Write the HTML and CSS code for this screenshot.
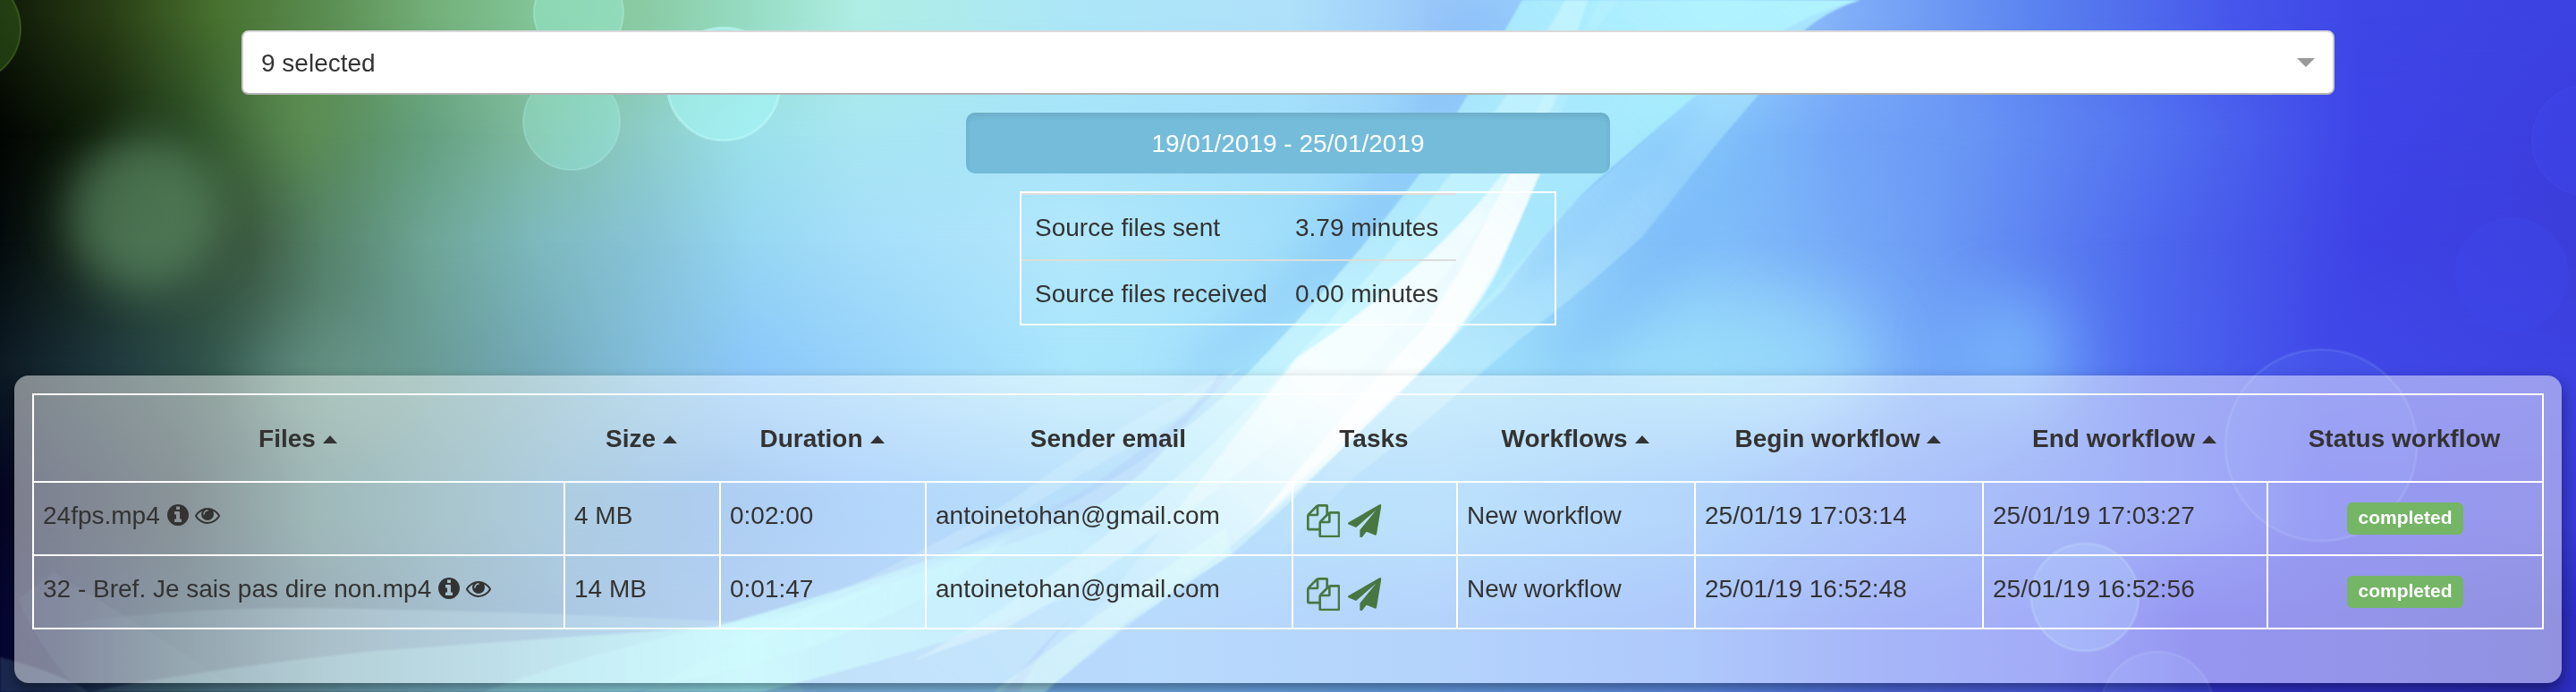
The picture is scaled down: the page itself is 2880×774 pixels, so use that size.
FILE: index.html
```html
<!DOCTYPE html>
<html lang="en">
<head>
<meta charset="utf-8">
<title>Workflows</title>
<link rel="stylesheet" href="styles.css">
</head>
<body>
<div class="backdrop">
  <div class="sky sky-1"></div>
  <div class="sky sky-2"></div>
  <div class="sky sky-3"></div>
  <div class="sky sky-4"></div>
  <div class="sky sky-5"></div>
  <div class="sky sky-6"></div>
  <svg class="rays" viewBox="0 0 2880 774" width="2880" height="774">
    <defs>
      <filter id="b2" x="-10%" y="-10%" width="120%" height="120%"><feGaussianBlur stdDeviation="1"/></filter>
      <filter id="b8" x="-20%" y="-20%" width="140%" height="140%"><feGaussianBlur stdDeviation="8"/></filter>
      <filter id="b20" x="-80%" y="-80%" width="260%" height="260%"><feGaussianBlur stdDeviation="24"/></filter>
      <filter id="b36" x="-120%" y="-120%" width="340%" height="340%"><feGaussianBlur stdDeviation="36"/></filter>
      <linearGradient id="band" gradientUnits="userSpaceOnUse" x1="1900" y1="0" x2="1000" y2="774">
        <stop offset="0" stop-color="#b4ffff" stop-opacity=".7"/>
        <stop offset=".25" stop-color="#b8f8ff" stop-opacity=".6"/>
        <stop offset=".5" stop-color="#dcffff" stop-opacity=".6"/>
        <stop offset=".75" stop-color="#b8f8ff" stop-opacity=".45"/>
        <stop offset="1" stop-color="#b4f8ff" stop-opacity=".3"/>
      </linearGradient>
      <linearGradient id="side" gradientUnits="userSpaceOnUse" x1="2050" y1="0" x2="1450" y2="620">
        <stop offset="0" stop-color="#b4f6ff" stop-opacity=".8"/>
        <stop offset=".3" stop-color="#b0e8ff" stop-opacity=".35"/>
        <stop offset=".7" stop-color="#d0f6ff" stop-opacity=".5"/>
        <stop offset="1" stop-color="#d0f6ff" stop-opacity=".05"/>
      </linearGradient>
      <linearGradient id="core" gradientUnits="userSpaceOnUse" x1="1740" y1="100" x2="1180" y2="740">
        <stop offset="0" stop-color="#e8ffff" stop-opacity=".1"/>
        <stop offset=".2" stop-color="#fff" stop-opacity=".75"/>
        <stop offset=".5" stop-color="#fff" stop-opacity=".8"/>
        <stop offset=".7" stop-color="#f0ffff" stop-opacity=".4"/>
        <stop offset="1" stop-color="#d8ffff" stop-opacity="0"/>
      </linearGradient>
      <linearGradient id="wave" gradientUnits="userSpaceOnUse" x1="80" y1="0" x2="1300" y2="0">
        <stop offset="0" stop-color="#8fd0dc" stop-opacity=".15"/>
        <stop offset=".35" stop-color="#98e0e6" stop-opacity=".42"/>
        <stop offset=".62" stop-color="#a8ffff" stop-opacity=".75"/>
        <stop offset=".8" stop-color="#a8f8ff" stop-opacity=".5"/>
        <stop offset="1" stop-color="#a8f4ff" stop-opacity="0"/>
      </linearGradient>
      <linearGradient id="veil" gradientUnits="userSpaceOnUse" x1="60" y1="0" x2="900" y2="0">
        <stop offset="0" stop-color="#a0d8e8" stop-opacity="0"/>
        <stop offset=".4" stop-color="#a0d8e8" stop-opacity=".3"/>
        <stop offset="1" stop-color="#a0e8f0" stop-opacity=".3"/>
      </linearGradient>
    </defs>

    <!-- soft blobs -->
    <ellipse cx="160" cy="238" rx="84" ry="86" fill="#5f8f68" opacity=".62" filter="url(#b20)"/>
    <ellipse cx="330" cy="120" rx="60" ry="60" fill="#6a9c5a" opacity=".35" filter="url(#b36)"/>
    <ellipse cx="370" cy="420" rx="90" ry="60" fill="#7cb09c" opacity=".35" filter="url(#b36)"/>
    <ellipse cx="2250" cy="395" rx="60" ry="60" fill="#84c4ff" opacity=".65" filter="url(#b36)"/>
    <ellipse cx="1980" cy="400" rx="110" ry="70" fill="#9ce0fa" opacity=".6" filter="url(#b36)"/>

    <!-- blue edges beside the ribbon -->
    <path d="M1690 0 Q1600 200 1530 280 Q1440 350 1360 420 L1300 420 Q1470 300 1560 170 L1620 0Z" fill="#78b2f6" opacity=".4" filter="url(#b20)"/>
    <path d="M1930 170 L1700 420 L1780 420 L2000 170Z" fill="#6fb2f8" opacity=".35" filter="url(#b20)"/>
    <path d="M1900 106 Q1800 190 1745 240 Q1720 290 1690 330 Q1800 270 1900 130Z" fill="#6fb8fa" opacity=".4" filter="url(#b8)"/>

    <!-- ribbon -->
    <g filter="url(#b2)">
      <path d="M1702 0 L1641 106 L1588 194 Q1500 310 1392 420 Q1240 570 1010 640 Q860 700 720 774 L1168 774 Q1280 680 1377 620 L1444 560 Q1600 400 1680 325 Q1740 240 1799 190 L1897 106 Q1990 20 2080 0Z" fill="url(#band)"/>
      <path d="M1800 0 L2080 0 Q2000 25 1966 106 L1920 160 L1836 265 Q1770 325 1699 380 L1587 477 L1510 537 L1430 620 L1444 560 Q1620 390 1745 240 L1897 106Z" fill="url(#side)"/>
      <path d="M1750 0 L1775 0 L1740 110 Q1670 260 1540 390 Q1360 570 1130 700 L1020 740 Q1270 600 1430 420 Q1630 210 1750 0Z" fill="#e6ffff" opacity=".35"/>
      <path d="M1790 0 L1810 0 L1784 34 L1735 150 Q1690 300 1603 400 Q1500 510 1377 610 Q1270 690 1180 740 Q1270 630 1340 540 L1450 400 Q1600 300 1680 194 L1730 100Z" fill="url(#core)"/>
      <path d="M1722 194 L1676 300 Q1630 390 1520 475 L1400 590 Q1510 450 1590 370 L1634 300 L1689 194Z" fill="#fff" opacity=".7"/>
      <path d="M1375 420 Q1345 450 1320 480 Q1270 550 1180 590 Q1120 615 1060 625 Q1160 580 1230 537 Q1300 485 1330 460 L1362 420Z" fill="#6f9ff2" opacity=".38"/>
      <path d="M1390 410 Q1250 470 1130 560 Q960 660 800 720 L840 720 Q1060 630 1210 530 Q1320 470 1390 410Z" fill="#e0ffff" opacity=".2"/>
      <path d="M1200 690 Q1165 720 1150 740 L1120 774 L1140 774 Q1160 730 1200 690Z" fill="#6b8ff0" opacity=".35"/>
      <path d="M1377 620 L1255 700 L1168 774 L1110 774 Q1220 690 1370 590Z" fill="#c8fff4" opacity=".4"/>
      <!-- wave at the lower left -->
      <path d="M60 700 Q200 676 408 681 Q640 686 830 696 L900 774 L60 774Z" fill="url(#veil)"/>
      <path d="M150 764 Q300 740 420 728 L800 701 Q1000 645 1160 580 L1300 620 Q1120 710 850 774 L100 774Z" fill="url(#wave)"/>
      <path d="M540 774 Q700 715 860 690 Q1020 650 1130 600 Q1000 720 700 774Z" fill="#aaffff" opacity=".3"/>
      <path d="M0 735 Q60 750 100 774 L0 774Z" fill="#7fb4c8" opacity=".2"/>
      <path d="M60 640 Q160 700 270 774 L90 774 Q40 720 20 670Z" fill="#8fb8c8" opacity=".07"/>
    </g>

    <!-- bokeh -->
    <g fill="#a4fff0" stroke="#c4ffff">
      <circle cx="-37" cy="32" r="60" fill="#3a6a20" fill-opacity=".45" stroke="#6fae3c" stroke-opacity=".3" stroke-width="2"/>
      <circle cx="647" cy="14" r="50" fill-opacity=".32" stroke-opacity=".3" stroke-width="2"/>
      <circle cx="639" cy="136" r="54" fill-opacity=".28" stroke-opacity=".22" stroke-width="2"/>
      <circle cx="809" cy="94" r="63" fill="#a8f6f6" fill-opacity=".6" stroke-opacity=".45" stroke-width="3"/>
      <circle cx="2595" cy="498" r="107" fill="#6aa0ff" fill-opacity=".12" stroke="#a0c8ff" stroke-opacity=".14" stroke-width="3"/>
      <circle cx="2331" cy="668" r="60" fill="#78b8ff" fill-opacity=".28" stroke="#a0d8ff" stroke-opacity=".22" stroke-width="3"/>
      <circle cx="2412" cy="792" r="63" fill="#78a8ff" fill-opacity=".14" stroke="#a0c8ff" stroke-opacity=".12" stroke-width="3"/>
      <circle cx="2893" cy="157" r="62" fill="#4048f0" fill-opacity=".35" stroke="#6070ff" stroke-opacity=".1" stroke-width="2"/>
      <circle cx="2808" cy="307" r="64" fill="#4048f0" fill-opacity=".3" stroke="none"/>
    </g>
  </svg>
</div>

<svg class="symbols" width="0" height="0">
  <symbol id="info" viewBox="128 128 1536 1536"><path d="M1152 1376v-160q0-14-9-23t-23-9h-96v-512q0-14-9-23t-23-9h-320q-14 0-23 9t-9 23v160q0 14 9 23t23 9h96v320h-96q-14 0-23 9t-9 23v160q0 14 9 23t23 9h448q14 0 23-9t9-23zm-128-896v-160q0-14-9-23t-23-9h-192q-14 0-23 9t-9 23v160q0 14 9 23t23 9h192q14 0 23-9t9-23zm640 416q0 209-103 385.5t-279.5 279.5-385.5 103-385.5-103-279.5-279.5-103-385.5 103-385.5 279.5-279.5 385.5-103 385.5 103 279.5 279.5 103 385.5z"/></symbol>
  <symbol id="eye" viewBox="0 384 1792 1152"><path d="M1664 960q-152-236-381-353 61 104 61 225 0 185-131.5 316.5t-316.5 131.5-316.5-131.5-131.5-316.5q0-121 61-225-229 117-381 353 133 205 333.5 326.5t434.5 121.5 434.5-121.5 333.5-326.5zm-720-384q0-20-14-34t-34-14q-125 0-214.5 89.5t-89.5 214.5q0 20 14 34t34 14 34-14 14-34q0-86 61-147t147-61q20 0 34-14t14-34zm848 384q0 34-20 69-140 230-376.5 368.5t-499.5 138.5-499.5-139-376.5-368q-20-35-20-69t20-69q140-229 376.5-368t499.5-139 499.5 139 376.5 368q20 35 20 69z"/></symbol>
  <symbol id="files" viewBox="0 0 1792 1792"><path d="M1696 384q40 0 68 28t28 68v1216q0 40-28 68t-68 28h-960q-40 0-68-28t-28-68v-288h-544q-40 0-68-28t-28-68v-672q0-40 20-88t48-76l408-408q28-28 76-48t88-20h416q40 0 68 28t28 68v328q68-40 128-40h416zm-544 213l-299 299h299v-299zm-640-384l-299 299h299v-299zm196 647l316-316v-416h-384v416q0 40-28 68t-68 28h-416v640h512v-256q0-40 20-88t48-76zm956 804v-1152h-384v416q0 40-28 68t-68 28h-416v640h896z"/></symbol>
  <symbol id="plane" viewBox="0 0 1792 1792"><path d="M1764 11q33 24 27 64l-256 1536q-5 29-32 45-14 8-31 8-11 0-24-5l-453-185-242 295q-18 23-49 23-13 0-22-4-19-7-30.5-23.5t-11.5-36.5v-349l864-1059-1069 925-395-162q-37-14-40-55-2-40 32-59l1664-960q15-9 32-9 20 0 36 11z"/></symbol>
</svg>

<main class="page">
  <div class="select"><span>9 selected</span><span class="select-arrow"></span></div>
  <button class="range">19/01/2019 - 25/01/2019</button>
  <section class="summary">
    <dl class="summary-list">
      <div class="summary-row"><dt>Source files sent</dt><dd>3.79 minutes</dd></div>
      <div class="summary-row"><dt>Source files received</dt><dd>0.00 minutes</dd></div>
    </dl>
  </section>
  <section class="panel">
    <table class="jobs">
      <colgroup>
        <col class="c-files"><col class="c-size"><col class="c-duration"><col class="c-sender"><col class="c-tasks"><col class="c-flow"><col class="c-begin"><col class="c-end"><col class="c-status">
      </colgroup>
      <thead>
        <tr>
          <th>Files<i class="caret"></i></th><th>Size<i class="caret"></i></th><th>Duration<i class="caret"></i></th><th>Sender email</th><th>Tasks</th><th>Workflows<i class="caret"></i></th><th>Begin workflow<i class="caret"></i></th><th>End workflow<i class="caret"></i></th><th>Status workflow</th>
        </tr>
      </thead>
      <tbody>
        <tr>
          <td>24fps.mp4<svg class="i-info"><use href="#info"/></svg><svg class="i-eye"><use href="#eye"/></svg></td>
          <td>4 MB</td><td>0:02:00</td><td>antoinetohan@gmail.com</td>
          <td><div class="tasks"><svg><use href="#files"/></svg><svg><use href="#plane"/></svg></div></td>
          <td>New workflow</td><td>25/01/19 17:03:14</td><td>25/01/19 17:03:27</td>
          <td><div class="badge">completed</div></td>
        </tr>
        <tr>
          <td>32 - Bref. Je sais pas dire non.mp4<svg class="i-info"><use href="#info"/></svg><svg class="i-eye"><use href="#eye"/></svg></td>
          <td>14 MB</td><td>0:01:47</td><td>antoinetohan@gmail.com</td>
          <td><div class="tasks"><svg><use href="#files"/></svg><svg><use href="#plane"/></svg></div></td>
          <td>New workflow</td><td>25/01/19 16:52:48</td><td>25/01/19 16:52:56</td>
          <td><div class="badge">completed</div></td>
        </tr>
      </tbody>
    </table>
  </section>
</main>
</body>
</html>
```
FILE: styles.css
```css
* { box-sizing: border-box; }
html, body { margin: 0; height: 774px; overflow: hidden; }
body {
  position: relative;
  font-family: "Liberation Sans", Arial, sans-serif;
  font-size: 28px;
  line-height: 40px;
  color: #333;
}

/* Backdrop: horizontal colour bands, each fading in over the one above */
.backdrop { position: absolute; inset: 0; overflow: hidden; z-index: -1; }
.sky, .rays { position: absolute; inset: 0; }
.sky-1 {
  background: linear-gradient(90deg, #0f1908 0, #283c14 120px, #47702f 240px, #5a8c50 360px, #73af78 480px, #82c598 600px, #8acba4 720px, #96dcc3 840px, #afeee4 960px, #ace6f8 1200px, #afe1fa 1440px, #9bc8fa 1600px, #96cdfc 1750px, #a0dcfc 1920px, #82aff8 2060px, #5a82f0 2280px, #4655eb 2500px, #3e46e6 2640px, #3c41e1 2880px);
}
.sky-2 {
  background: linear-gradient(90deg, #020502 0, #0f1e0a 110px, #2d4f28 220px, #558550 340px, #64a080 480px, #80bca2 600px, #8ccdc8 720px, #9be1eb 840px, #a8e6f2 960px, #a5e4fa 1200px, #a0defa 1440px, #96d2fa 1620px, #82c3fa 1920px, #73a5f8 2060px, #6996f5 2200px, #506ef0 2430px, #3e44e8 2640px, #3c3edc 2880px);
  mask-image: linear-gradient(transparent 20px, #000 150px);
}
.sky-3 {
  background: linear-gradient(90deg, #030a0c 0, #142218 70px, #2c4630 160px, #3c5a41 280px, #558269 360px, #6ea596 480px, #7db9be 600px, #87c3d7 720px, #96d7f2 840px, #a5defa 960px, #b4e8fc 1200px, #a0defa 1440px, #82befa 1920px, #6c9bf5 2160px, #4e69ee 2400px, #3e42e6 2640px, #3c3eda 2880px);
  mask-image: linear-gradient(transparent 150px, #000 270px);
}
.sky-4 {
  background: linear-gradient(90deg, #0c1923 0, #1e373c 120px, #32554b 240px, #557d72 360px, #699b96 480px, #73aab9 600px, #82bedc 720px, #8cc8fa 840px, #96d2fa 960px, #aae6fc 1200px, #96d7fa 1900px, #82b9fa 2060px, #6496f5 2240px, #4e69f0 2400px, #4048e8 2600px, #3c41e0 2880px);
  mask-image: linear-gradient(transparent 270px, #000 400px);
}
.sky-5 {
  background: linear-gradient(90deg, #050523 0, #0a1430 60px, #1e323c 200px, #467878 350px, #5a91a0 500px, #64a0c8 640px, #64a0e4 800px, #6eaff8 960px, #78c3f8 1200px, #80c6fa 1600px, #6eaff8 1900px, #648ff6 2100px, #5578f2 2300px, #4a60f0 2450px, #373ce8 2600px, #3a3cd8 2880px);
  mask-image: linear-gradient(transparent 420px, #000 550px);
}
.sky-6 {
  background: linear-gradient(90deg, #050532 0, #0a1440 60px, #1e3c50 200px, #416478 350px, #5584a4 500px, #5f96c8 640px, #6ea5e4 800px, #78b4f4 1000px, #78b8fa 1300px, #70acfa 1600px, #6496f8 1900px, #5573f2 2100px, #4e60f0 2300px, #3737e6 2450px, #2d2dc3 2880px);
  mask-image: linear-gradient(transparent 580px, #000 690px);
}
.symbols { position: absolute; }

.page { display: flex; flex-direction: column; align-items: center; padding: 34px 16px 0; }

.select {
  display: flex; align-items: center; justify-content: space-between;
  width: 2340px; height: 72px; padding: 0 20px;
  background: #fff;
  border: 2px solid; border-color: #d9d9d9 #ccc #b3b3b3;
  border-radius: 8px;
}
.select span:first-child { padding-top: 2px; }
.select-arrow { border: 10px solid transparent; border-top-color: #999; border-bottom: 0; }

.range {
  width: 720px; height: 68px; margin: 20px 0; padding: 2px 0 0;
  border: 0; border-radius: 10px;
  background: #74bcda;
  box-shadow: inset 0 4px 6px rgba(0, 0, 0, .08);
  color: #fff; font: inherit;
}

.summary { width: 600px; height: 150px; border: 2px solid #fff; }
.summary-list { width: 486px; margin: 0; }
.summary-row { display: flex; height: 74px; padding: 15px 15px 0; border-top: 2px solid #ddd; line-height: 44px; }
.summary-row dt { width: 291px; }
.summary-row dd { margin: 0; white-space: nowrap; }

.panel {
  align-self: stretch; height: 344px; margin-top: 56px; padding: 20px;
  background: rgba(255, 255, 255, .48);
  border-radius: 16px;
  box-shadow: 0 8px 16px rgba(0, 0, 0, .45);
}
.jobs {
  table-layout: fixed; width: 2808px;
  border-collapse: separate; border-spacing: 0;
  border: solid #fff; border-width: 2px 0 0 2px;
}
.c-files { width: 594px; } .c-size { width: 174px; } .c-duration { width: 230px; }
.c-sender { width: 410px; } .c-tasks { width: 184px; } .c-flow { width: 266px; }
.c-begin { width: 322px; } .c-end { width: 318px; } .c-status { width: 308px; }
.jobs th { height: 98px; padding: 2px 4px 0 0; border-bottom: 2px solid #fff; white-space: nowrap; }
.jobs th:last-child { padding-right: 2px; border-right: 2px solid #fff; }
.jobs td {
  height: 82px; padding: 17px 10px 0; vertical-align: top;
  border: solid #fff; border-width: 0 2px 2px 0; white-space: nowrap;
}
.caret { display: inline-block; margin-left: 8px; vertical-align: 4px; border: 8px solid transparent; border-bottom: 9px solid #333; border-top: 0; }
.i-info { width: 24px; height: 24px; margin-left: 8px; vertical-align: -2px; fill: #333; }
.i-eye { width: 28px; height: 18px; margin-left: 7px; fill: #333; }
.tasks { display: flex; gap: 9px; padding: 7px 0 0 5px; }
.tasks svg { width: 37.4px; height: 37.4px; fill: #487742; }
.badge {
  width: 130px; height: 36px; margin: 5px auto 0;
  border-radius: 6px; background: #74b566;
  color: #fff; font-size: 21px; font-weight: bold; line-height: 33px; text-align: center;
}
```
